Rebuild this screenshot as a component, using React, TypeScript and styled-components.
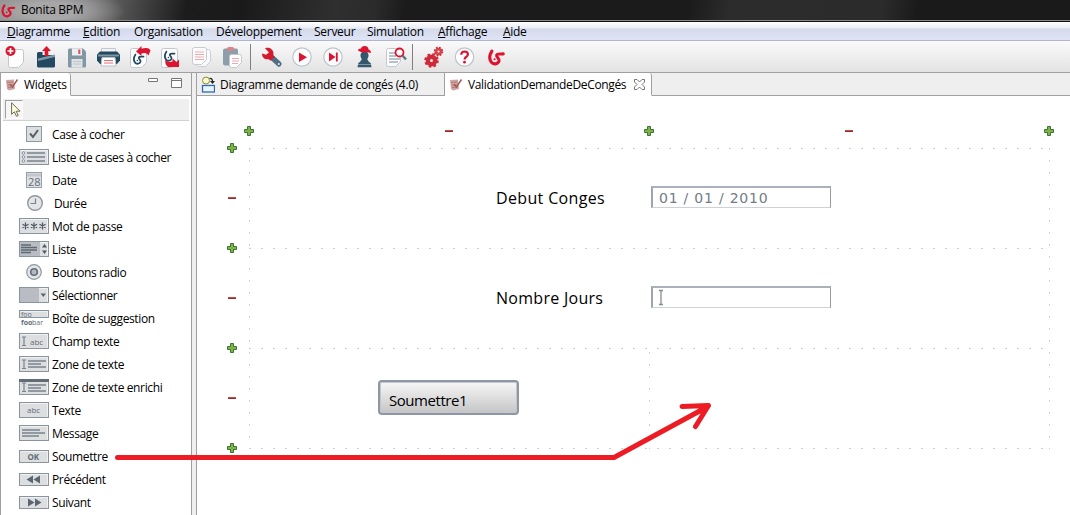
import React from "react";
import styled, { createGlobalStyle } from "styled-components";

const GlobalStyle = createGlobalStyle`
  html, body { margin: 0; background: #fff; overflow: hidden; }
  * { box-sizing: border-box; }
  svg { display: block; flex: none; }
`;

const Window = styled.div`
  position: relative;
  display: flex;
  flex-direction: column;
  width: 1070px;
  height: 515px;
  overflow: hidden;
  background: #efefef;
  color: #000;
  font: 12px/16px "Open Sans", "Noto Sans", sans-serif;
`;

const TitleBar = styled.header`
  display: flex;
  align-items: center;
  flex: none;
  height: 22px;
  padding: 0 0 1px 1px;
  gap: 5px;
  border-bottom: 1px solid #101010;
  box-shadow: inset 0 -1px 0 #8d898c;
  background:
    radial-gradient(ellipse 75px 24px at 50px 11px, rgba(172, 172, 172, 0.9) 35%, rgba(150, 150, 150, 0) 100%),
    linear-gradient(100deg, #8c8c8c 0, #707070 90px, #3a3a3a 150px, #1c1c1c 185px, #1a1a1a 240px, #2f2f2f 330px, #2b2b2b 370px, #1b1b1b 400px, #1b1b1b 680px, #2c2c2c 720px, #2b2b2b 870px, #1a1a1a 905px);
`;

const Text = styled.span<{ $w?: number; $ls?: number }>`
  display: block;
  flex: none;
  width: ${(p) => (p.$w ? `${p.$w}px` : "auto")};
  letter-spacing: ${(p) => p.$ls ?? -0.3}px;
  white-space: nowrap;
`;

const MenuBar = styled.nav`
  display: flex;
  flex: none;
  gap: 14px;
  height: 19px;
  padding: 2px 0 0 7px;
  border-bottom: 1px solid #b0b7cd;
  background: linear-gradient(#fff 0, #e9edf5 6px, #d5daeb 7px, #dfe4f6 18px);
`;

const ToolBar = styled.div`
  display: flex;
  flex: none;
  height: 32px;
  border-bottom: 1px solid #a0a0a0;
  background: linear-gradient(#fafafa, #e3e3e3);
`;

const ToolButton = styled.span`
  width: 31px;
  padding: 4px 0 0 4px;
`;

const Separator = styled.i<{ $w: number }>`
  width: ${(p) => p.$w}px;
  margin: 3px 0 2px;
  background: linear-gradient(#7f7f7f, #7f7f7f) 2px 0 / 1px 100% no-repeat;
`;

const Workbench = styled.main`
  display: flex;
  flex: 1;
  gap: 4px;
  min-height: 0;
`;

const Palette = styled.aside`
  width: 192px;
  border: solid #a0a0a0;
  border-width: 0 1px;
  background: #fff;
`;

const Editor = styled.section`
  flex: 1;
  border-left: 1px solid #a0a0a0;
  background: #fff;
`;

const TabStrip = styled.div`
  display: flex;
  height: 23px;
  background: #efefef;
`;

const Tab = styled.div<{ $w: number; $active?: boolean }>`
  display: flex;
  flex: none;
  align-items: center;
  width: ${(p) => p.$w}px;
  padding: 1px 0 0 4px;
  gap: 5px;
  border-right: 1px solid #a0a0a0;
  border-bottom: 1px solid ${(p) => (p.$active ? "#fff" : "#a0a0a0")};
  border-top-right-radius: ${(p) => (p.$active ? 3 : 0)}px;
  background: ${(p) => (p.$active ? "#fff" : "#efefef")};
`;

const StripRest = styled.div`
  display: flex;
  flex: 1;
  justify-content: flex-end;
  gap: 13px;
  padding: 5px 9px 0 0;
  border-bottom: 1px solid #a0a0a0;
`;

const PaletteTools = styled.div`
  height: 22px;
  margin: 3px 2px 2px;
  padding-top: 1px;
  border-bottom: 1px solid #d0d0d0;
  background: #efefef;
`;

const SelectTool = styled.div`
  width: 18px;
  height: 19px;
  margin-left: 2px;
  padding: 1px 0 0 5px;
  border: 1px solid;
  border-color: #a0a0a0 #fff #fff #a0a0a0;
  background: #f6f6f6;
`;

const WidgetRow = styled.div<{ $shift?: number }>`
  display: grid;
  grid-template-columns: 30px 1fr;
  align-items: center;
  column-gap: ${(p) => 3 + (p.$shift ?? 0)}px;
  height: 23px;
  padding-left: 18px;
`;

const Canvas = styled.div`
  display: grid;
  grid-template-columns: 10px 801px;
  grid-template-rows: 10px 301px;
  column-gap: 12px;
  row-gap: 12px;
  padding: 30px 0 0 30px;
`;

const ColumnHandles = styled.div`
  grid-column: 2;
  display: flex;
  justify-content: space-between;
  width: 810px;
  margin-left: -5px;
`;

const RowHandles = styled.div`
  display: flex;
  flex-direction: column;
  justify-content: space-between;
  height: 310px;
  margin-top: -5px;
`;

const hDots = "linear-gradient(90deg, #cdcdcd 2px, transparent 2px)";
const vDots = "linear-gradient(#cdcdcd 2px, transparent 2px)";

const FormGrid = styled.div`
  display: grid;
  grid-template-columns: 400px 401px;
  grid-template-rows: 100px 100px 101px;
  background-image: ${hDots}, ${hDots}, ${hDots}, ${hDots}, ${vDots}, ${vDots};
  background-size: 12px 1px, 12px 1px, 12px 1px, 12px 1px, 1px 12px, 1px 12px;
  background-position: 0 0, 0 100px, 0 200px, 0 300px, 0 0, 800px 0;
  background-repeat: repeat-x, repeat-x, repeat-x, repeat-x, repeat-y, repeat-y;
`;

const FieldCell = styled.div`
  grid-column: span 2;
  display: flex;
  align-items: flex-start;
  padding: 38px 0 0 247px;
`;

const FieldLabel = styled.label<{ $ls: number }>`
  width: 155px;
  font-size: 16px;
  line-height: 24px;
  letter-spacing: ${(p) => p.$ls}px;
`;

const FieldBox = styled.div`
  width: 180px;
  height: 22px;
  padding: 1px 0 0 6px;
  border: solid;
  border-width: 2px 1px 1px 2px;
  border-color: #abb1b9 #969ba4 #cfd1d4 #9fa5ae;
  color: #747c86;
  font: 14px/18px "DejaVu Sans", sans-serif;
  letter-spacing: 0.78px;
  white-space: pre;
`;

const ButtonCell = styled.div`
  padding: 32px 0 0 129px;
`;

const EmptyCell = styled.div`
  background: ${vDots} 0 4px / 1px 12px repeat-y;
`;

const SubmitButton = styled.div`
  width: 141px;
  height: 35px;
  padding: 6px 0 0 9px;
  border: 2px solid #8f97a3;
  border-radius: 4px;
  box-shadow: inset 0 0 0 1px #c3c7cd;
  background: linear-gradient(#f7f7f7, #c5c5c5);
  font-size: 15px;
  line-height: 24px;
  letter-spacing: -0.45px;
`;

const ArrowOverlay = styled.svg`
  position: absolute;
  left: 0;
  top: 0;
  pointer-events: none;
`;

const RED = "#dc1430";
const NAVY = "#22495f";
const SWIRL = "M3.200 1.500C1 5 .6 9.200 2.600 12c2 2.700 6.400 2 7.400-1 .8-2.700-2.700-3.500-2.200-5.600.5-1.700 3.200-.9 6.200-1.200";

const Swirl = ({ x = 0, y = 0, s = 1, color = RED, w = 2.6 }: { x?: number; y?: number; s?: number; color?: string; w?: number }) => (
  <g transform={`translate(${x} ${y}) scale(${s})`}>
    <path d={SWIRL} fill="none" stroke={color} strokeWidth={w} strokeLinecap="round" />
    <circle cx="5.800" cy="9.300" r="1" fill={color} />
  </g>
);

const Sheet = ({ x, y, w, h, o = 1 }: { x: number; y: number; w: number; h: number; o?: number }) => (
  <path
    d={`M${x + 2} ${y}h${w - 4}q2 0 2 2v${h - 7}l-5 5h${-(w - 7)}q-2 0-2-2V${y + 2}q0-2 2-2z`}
    fill="#fdfdfd" stroke="#c3c8cd" opacity={o}
  />
);

const Disc = ({ cx = 12 }: { cx?: number }) => <circle cx={cx} cy="12" r="9.2" fill="#fdfdfd" stroke="#bcc5cb" strokeWidth="1.2" />;

const toolIcons: Record<string, React.ReactNode> = {
  create: <><Sheet x={4.5} y={4.5} w={15} h={18} /><circle cx="6.500" cy="6" r="5" fill={RED} /><path d="M6.500 3v6M3.500 6h6" stroke="#fff" strokeWidth="1.7" /></>,
  open: <><path d="M2 8.500q0-1.500 1.500-1.500h4v3h11q1.500 0 1.500 1.500V21q0 1.500-1.500 1.500h-15Q2 22.500 2 21z" fill={NAVY} /><path d="M3 13.500l17-4v2.500L3 16z" fill="#7d98a6" /><path d="M11.500 1l4.500 5h-2.700v5H9.700V6H7z" fill={RED} /></>,
  save: <><path d="M3.500 3.500h13.500l3 3V21q0 1.500-1.500 1.500h-15Q2 22.500 2 21V5q0-1.500 1.500-1.500z" fill="#8296a4" /><path d="M6 3.500h10v7H6z" fill="#eceff1" /><path d="M12.300 4.500h2v4.500h-2z" fill="#e0505c" /><path d="M5.500 14h11v8.500h-11z" fill="#dfe3e6" /><path d="M7 16.500h8M7 19h8" stroke="#bcc5cb" /></>,
  print: <><path d="M4.500 3.500h14v5h-14z" fill="#f4f4f4" stroke="#c3c8cd" /><path d="M3 6.500h17l3 3v6l-3 3.500H3l-3-3.500v-6z" fill={NAVY} /><path d="M1 10.500h21" stroke="#7f97a5" strokeWidth="2" /><path d="M5 12.500h13l1 8.500H4z" fill="#fff" stroke="#b9c1c7" /><path d="M7 15.500h9M7 18h9" stroke="#e56a75" strokeWidth="1.200" /></>,
  undo: <><Sheet x={2.5} y={3.5} w={16} h={19} /><Swirl x={5} y={8.5} s={0.75} color={NAVY} w={2.4} /><path d="M8 6.500L13.500 1v3q7-2.500 9 1.500l-2 5q-2-3.500-7-2v2.500z" fill={RED} /></>,
  redo: <><Sheet x={2.5} y={3.5} w={16} h={19} /><Swirl x={5} y={5.5} s={0.75} color={NAVY} w={2.4} /><path d="M6.500 14q1.500 4 7 2.500v-3l4 3.500 2.500-2.500v7.500H9Q5.500 19.500 6.500 14z" fill={RED} /></>,
  copy: <><Sheet x={6.5} y={4.5} w={14} h={17} o={0.8} /><Sheet x={2.5} y={2.5} w={14} h={17} o={0.9} /><path d="M5 7h9M5 9.500h9M5 12h9M5 14.500h9" stroke="#ecaab0" /></>,
  paste: <><rect x="2" y="3.500" width="15" height="17" rx="2" fill="#8b9eaa" /><rect x="6" y="2" width="7" height="4" rx="1.500" fill="#d8848c" /><Sheet x={8.5} y={9.5} w={12} h={13} /><path d="M11 13.500h7M11 16h7M11 18.500h6" stroke="#ecaab0" /></>,
  wrench: <><path d="M13 12.500l7 6.500" stroke="#4f6e82" strokeWidth="5.200" strokeLinecap="round" /><circle cx="19.800" cy="19" r="1.100" fill="#dfe6ea" /><path d="M6 3.200C10 1.800 14 4 14.500 8q0 1.500-.3 2.300l1.300 1.400-4 4-1.700-1.500C6 15 3 12.500 3 8.500l4 1.300 3-2.300z" fill="#d31a2e" /></>,
  play: <><Disc /><path d="M9 7.500l8 4.700-8 4.800z" fill={RED} /></>,
  step: <><Disc /><path d="M8 7.500l6.500 4.500L8 16.500z" fill={RED} /><path d="M15.800 7.500v9" stroke={RED} strokeWidth="1.800" /></>,
  user: <><circle cx="12.500" cy="10.500" r="4" fill="#35576c" /><path d="M10 12h5q0 4 3.800 6.200l.7 4h-14l.7-4Q10 16 10 12z" fill="#35576c" /><path d="M6 19.500h13" stroke="#7f97a5" /><path d="M6 5.500q0-2 3-2 .5-2.500 3.500-2.500 4 0 4 3.500 2.500.5 2.500 3.500-3-1-6.500-.5-3 .5-6.500-2z" fill={RED} /></>,
  inspect: <><Sheet x={3.5} y={3.5} w={14} h={18} /><path d="M6 8h7M6 11h7M6 14h11M6 17h9" stroke="#73899a" strokeWidth="1.200" /><circle cx="16.500" cy="7.500" r="4" fill="#fdfdfd" stroke={RED} strokeWidth="1.800" /><path d="M19.500 10.500l3.500 4" stroke="#5c7688" strokeWidth="2.500" /></>,
  gears: <><circle cx="10.500" cy="15.500" r="3.700" fill="none" stroke="#cf2a3a" strokeWidth="4.400" /><circle cx="10.500" cy="15.500" r="6.300" fill="none" stroke="#cf2a3a" strokeWidth="2" strokeDasharray="2.600 2.348" /><circle cx="17.500" cy="6.500" r="2.400" fill="none" stroke="#d8434c" strokeWidth="2.600" /><circle cx="17.500" cy="6.500" r="4" fill="none" stroke="#cf2a3a" strokeWidth="1.500" strokeDasharray="1.800 1.342" /></>,
  help: <><Disc cx={12.5} /><path d="M9.200 9.700q.2-3.200 3.500-3.200 3.200.1 3.200 2.800 0 1.600-1.800 2.700-1.500.9-1.500 2.400" fill="none" stroke={RED} strokeWidth="2.200" /><circle cx="12.500" cy="17.200" r="1.400" fill={RED} /></>,
  bonita: <Swirl x={5.5} y={4.5} s={1.05} w={3} />,
};

const Tool = ({ name }: { name: string }) => (
  <ToolButton><svg width="24" height="24" viewBox="0 0 24 24">{toolIcons[name]}</svg></ToolButton>
);

const FormIcon = () => (
  <svg width="14" height="14" viewBox="0 0 14 14">
    <path d="M1 2l8-.5L10 11l-6 1.500L2 11z" fill="#cfa49f" />
    <path d="M2 4.500l6-.5M2.500 7l5-.5M3 9.500l6-.5" stroke="#b07b76" />
    <path d="M12.500 1.500L7.500 9 5 6.500" fill="none" stroke="#a35550" strokeWidth="1.400" />
  </svg>
);

const DiagramIcon = () => (
  <svg width="14" height="17" viewBox="0 0 14 17">
    <circle cx="5" cy="4.500" r="3.500" fill="#fafac8" stroke="#8d8c3c" />
    <path d="M8.500 2.500q3-.5 3 3" fill="none" stroke="#222" strokeWidth="1.200" /><path d="M9 5h5l-2.500 3z" fill="#222" />
    <rect x="1.500" y="9.500" width="12" height="6.500" fill="#eaf4fd" stroke="#2f6cab" strokeWidth="1.300" />
  </svg>
);

const CloseIcon = () => (
  <svg width="11" height="11" viewBox="0 0 11 11">
    <path d="M.5.500h2.500l2.500 2.500L8 .5h2.500V3L8 5.500 10.500 8v2.500H8L5.500 8 3 10.500H.5V8L3 5.500.5 3z" fill="#fff" stroke="#777" />
  </svg>
);

const Plus = () => (
  <svg width="10" height="10" viewBox="0 0 10 10"><path d="M3.500.5h3v3h3v3h-3v3h-3v-3h-3v-3h3z" fill="#83b045" stroke="#347936" /></svg>
);

const Minus = () => (
  <svg width="10" height="10" viewBox="0 0 10 10"><path d="M1 4h8v1H1z" fill="#cb4744" /><path d="M1 5h8v1H1z" fill="#982b30" /></svg>
);

const G = "#7b838c";
const Frame = ({ y = 1, h = 15, children }: { y?: number; h?: number; children?: React.ReactNode }) => (
  <svg width="30" height="17" viewBox="0 0 30 17">
    <rect x=".5" y={y - 0.5} width="29" height={h} fill="#dcdee0" stroke="#8a949f" />
    <path d={`M1.500 ${y + 0.5}h27v${h - 2}`} stroke="#f0f1f2" fill="none" />
    {children}
  </svg>
);
const Square = ({ children }: { children: React.ReactNode }) => <svg width="30" height="17" viewBox="0 0 30 17">{children}</svg>;
const Mini = ({ x, y, size = 8, bold, children }: { x: number; y: number; size?: number; bold?: boolean; children: string }) => (
  <text x={x} y={y} fontSize={size} fontFamily="Open Sans, sans-serif" fontWeight={bold ? 700 : 400} fill="#626c77">{children}</text>
);
const IBeam = () => <path d="M3 4h4M5 4v8.500M3 12.500h4" stroke={G} strokeWidth="1.200" fill="none" />;

const widgets: { label: string; shift?: number; icon: React.ReactNode }[] = [
  { label: "Case à cocher", icon: <Square><rect x="7.500" y=".5" width="15" height="15" fill="#dcdee0" stroke="#8f99a3" /><path d="M11 7.500l3 3.500 5-7" stroke="#535e69" strokeWidth="2" fill="none" /></Square> },
  { label: "Liste de cases à cocher", icon: <Frame><path d="M8 4h18M8 8h18M8 12h18" stroke={G} strokeWidth="1.400" /><g fill="#eee" stroke={G} strokeWidth=".8"><circle cx="4.500" cy="4" r="1.300" /><circle cx="4.500" cy="8" r="1.300" /><circle cx="4.500" cy="12" r="1.300" /></g></Frame> },
  { label: "Date", icon: <Square><rect x="7.500" y=".5" width="15" height="15" fill="#dfe1e3" stroke="#98a1aa" /><path d="M8 3h14" stroke="#c3c7cc" strokeWidth="3" /><Mini x={9} y={14} size={11}>28</Mini></Square> },
  { label: "Durée", shift: 2, icon: <Square><circle cx="16" cy="8" r="7.300" fill="#e4e5e7" stroke="#8f97a0" strokeWidth="1.400" /><path d="M16.500 3.500v5h-5" stroke="#7a838d" strokeWidth="1.200" fill="none" /></Square> },
  { label: "Mot de passe", icon: <Frame><path d="M6.500 4.500v7M3.500 6.300l6 3.500M9.500 6.300l-6 3.500M15 4.500v7M12 6.300l6 3.500M18 6.300l-6 3.500M23.500 4.500v7M20.500 6.300l6 3.500M26.500 6.300l-6 3.500" stroke="#4d5863" strokeWidth="1.200" /></Frame> },
  { label: "Liste", icon: <Frame><path d="M1 1h20v14H1z" fill="#b9bdc3" /><path d="M2 4h10M2 6.500h16M2 9h16M2 11.500h10" stroke="#5f6974" strokeWidth="1.500" /><path d="M23 6.500l2.500-3.500L28 6.500zM23 9.500l2.500 3.500L28 9.500z" fill="#4f5964" /></Frame> },
  { label: "Boutons radio", icon: <Square><circle cx="15" cy="8" r="7.300" fill="#e3e5e7" stroke="#8f97a0" strokeWidth="1.200" /><circle cx="15" cy="8" r="3.300" fill="#b4bac1" stroke="#646e79" strokeWidth="1.600" /></Square> },
  { label: "Sélectionner", icon: <Frame><path d="M1 1h19v14H1z" fill="#b9bdc3" /><path d="M21.500 6.500h5.500l-2.700 3.500z" fill="#5a6571" /></Frame> },
  { label: "Boîte de suggestion", icon: <Frame y={1} h={7}><Mini x={2} y={7} size={7}>foo</Mini><Mini x={2} y={15} size={7} bold>foo</Mini><Mini x={13} y={15} size={7}>bar</Mini></Frame> },
  { label: "Champ texte", icon: <Frame><IBeam /><Mini x={11} y={12}>abc</Mini></Frame> },
  { label: "Zone de texte", icon: <Frame><IBeam /><path d="M9 5h18M9 8h13M9 11h18" stroke={G} strokeWidth="1.400" /></Frame> },
  { label: "Zone de texte enrichi", icon: <Frame><path d="M0 1.500h30" stroke="#626c77" strokeWidth="3" /><IBeam /><path d="M9 6h18M9 9h13M9 12h18" stroke={G} strokeWidth="1.400" /></Frame> },
  { label: "Texte", icon: <Frame><Mini x={8} y={11}>abc</Mini></Frame> },
  { label: "Message", icon: <Frame><path d="M3 5h18M3 8h23M3 11h17" stroke={G} strokeWidth="1.400" /></Frame> },
  { label: "Soumettre", icon: <Frame y={3} h={12}><Mini x={8.5} y={11.5} bold>OK</Mini></Frame> },
  { label: "Précédent", icon: <Frame y={3} h={12}><path d="M14 4.500v8L7.500 8.500zM21 4.500v8l-6.500-4z" fill="#5a6571" /></Frame> },
  { label: "Suivant", icon: <Frame y={3} h={12}><path d="M9 4.500v8l6.500-4zM16 4.500v8l6.500-4z" fill="#5a6571" /></Frame> },
];

const menus: [string, boolean, number][] = [
  ["Diagramme", true, 62],
  ["Edition", true, 37],
  ["Organisation", false, 68],
  ["Développement", false, 84],
  ["Serveur", false, 39],
  ["Simulation", false, 57],
  ["Affichage", true, 51],
  ["Aide", true, 25],
];

export default function App() {
  return (
    <Window>
      <GlobalStyle />
      <TitleBar>
        <svg width="15" height="17" viewBox="0 0 15 17"><Swirl x={0.5} y={2} s={0.9} w={2.5} /></svg>
        <Text>Bonita BPM</Text>
      </TitleBar>
      <MenuBar>
        {menus.map(([label, mnemonic, w]) => (
          <Text key={label} $w={w} $ls={-0.28}>{mnemonic ? <><u>{label[0]}</u>{label.slice(1)}</> : label}</Text>
        ))}
      </MenuBar>
      <ToolBar>
        {["create", "open", "save", "print", "undo", "redo", "copy", "paste"].map((n) => <Tool key={n} name={n} />)}
        <Separator $w={7} />
        {["wrench", "play", "step", "user", "inspect"].map((n) => <Tool key={n} name={n} />)}
        <Separator $w={7} />
        {["gears", "help", "bonita"].map((n) => <Tool key={n} name={n} />)}
      </ToolBar>
      <Workbench>
        <Palette>
          <TabStrip>
            <Tab $w={70} $active><FormIcon /><Text>Widgets</Text></Tab>
            <StripRest>
              <svg width="10" height="12"><path d="M.5.500h9v3h-9z" fill="#fff" stroke="#777" /></svg>
              <svg width="11" height="12"><path d="M.5.500h10v9H.5zM.5 2.500h10" fill="#fff" stroke="#777" /></svg>
            </StripRest>
          </TabStrip>
          <PaletteTools>
            <SelectTool>
              <svg width="10" height="15" viewBox="0 0 10 15"><path d="M.6.800v11.500l2.700-2.500 2.200 4.500 1.800-.9-2.200-4.200h4z" fill="#fffce0" stroke="#6d6a50" /></svg>
            </SelectTool>
          </PaletteTools>
          {widgets.map((w) => (
            <WidgetRow key={w.label} $shift={w.shift}>{w.icon}<Text $ls={-0.37}>{w.label}</Text></WidgetRow>
          ))}
        </Palette>
        <Editor>
          <TabStrip>
            <Tab $w={248}><DiagramIcon /><Text $ls={-0.32}>Diagramme demande de congés (4.0)</Text></Tab>
            <Tab $w={207} $active><FormIcon /><Text $w={161} $ls={-0.35}>ValidationDemandeDeCongés</Text><CloseIcon /></Tab>
            <StripRest />
          </TabStrip>
          <Canvas>
            <ColumnHandles><Plus /><Minus /><Plus /><Minus /><Plus /></ColumnHandles>
            <RowHandles><Plus /><Minus /><Plus /><Minus /><Plus /><Minus /><Plus /></RowHandles>
            <FormGrid>
              <FieldCell><FieldLabel $ls={0.35}>Debut Conges</FieldLabel><FieldBox>01 / 01 / 2010</FieldBox></FieldCell>
              <FieldCell>
                <FieldLabel $ls={0.28}>Nombre Jours</FieldLabel>
                <FieldBox><svg width="5" height="17"><path d="M0 1.500h4M2 1v15M0 15.500h4" stroke="#888d94" strokeWidth="1.300" fill="none" /></svg></FieldBox>
              </FieldCell>
              <ButtonCell><SubmitButton>Soumettre1</SubmitButton></ButtonCell>
              <EmptyCell />
            </FormGrid>
          </Canvas>
        </Editor>
      </Workbench>
      <ArrowOverlay width="1070" height="515" viewBox="0 0 1070 515">
        <path d="M117.500 457.500H614L707 407M682 406.500L708.500 405.500 695.500 426.500" fill="none" stroke="#ed1c24" strokeWidth="5" strokeLinecap="round" strokeLinejoin="round" />
      </ArrowOverlay>
    </Window>
  );
}
